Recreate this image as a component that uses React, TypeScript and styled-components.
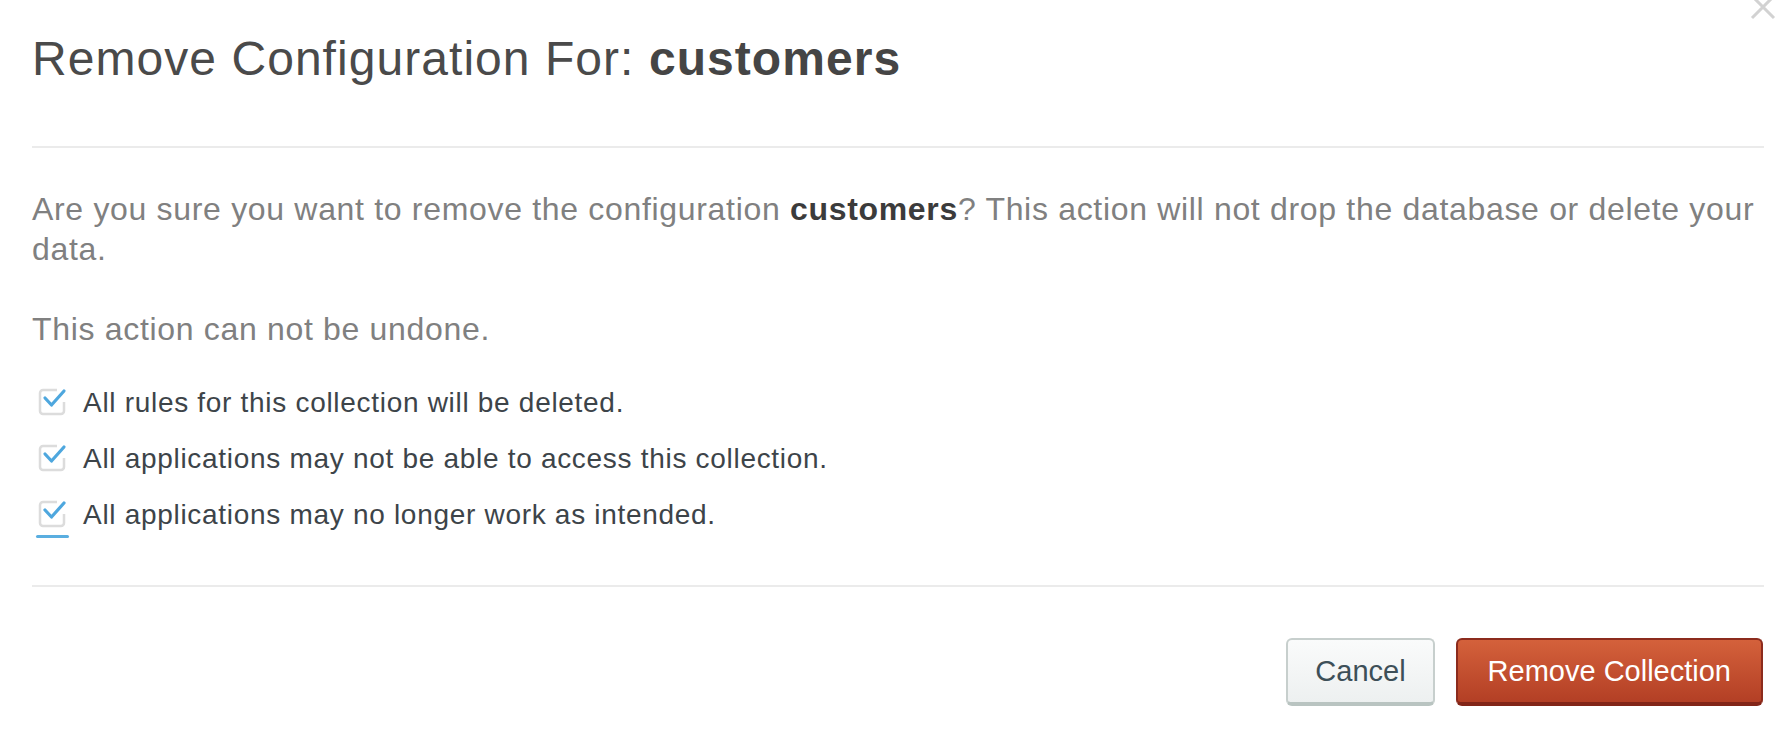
import React from "react";
import styled, { createGlobalStyle } from "styled-components";

/** Constants */
const NAME = "customers";
const CONSEQUENCES = [
  "All rules for this collection will be deleted.",
  "All applications may not be able to access this collection.",
  "All applications may no longer work as intended.",
];

const GlobalStyle = createGlobalStyle`
  html, body {
    margin: 0;
    padding: 0;
    background: #ffffff;
  }
  body {
    font-family: "Liberation Sans", Arial, sans-serif;
    -webkit-font-smoothing: antialiased;
  }
`;

const Modal = styled.div`
  position: relative;
  box-sizing: border-box;
  width: 1780px;
  height: 734px;
  padding: 0 16px 0 32px;
  overflow: hidden;
  background: #ffffff;
`;

const CloseButton = styled.button`
  position: absolute;
  top: -7px;
  right: 3px;
  width: 28px;
  height: 28px;
  padding: 0;
  border: 0;
  background: none;
  cursor: pointer;
`;

const Header = styled.header`
  padding: 30px 0 58px;
  border-bottom: 2px solid #ebebeb;
`;

const Title = styled.h2`
  margin: 0;
  font-size: 48px;
  line-height: 58px;
  font-weight: 400;
  letter-spacing: 1.05px;
  color: #4a4a4a;

  strong {
    font-weight: 700;
    color: #454545;
  }
`;

const Body = styled.section`
  padding: 41px 0 42px;
  border-bottom: 2px solid #ebebeb;
`;

const Paragraph = styled.p<{ $gap?: number }>`
  margin: ${(p) => p.$gap ?? 0}px 0 0;
  font-size: 32px;
  line-height: 40px;
  letter-spacing: 0.68px;
  color: #808080;

  strong {
    font-weight: 700;
    color: #3b3b3b;
  }
`;

const List = styled.ul`
  list-style: none;
  margin: 26px 0 0;
  padding: 0;
`;

const Item = styled.li`
  display: flex;
  align-items: center;
  gap: 16px;
  height: 56px;
  padding-left: 5px;
  font-size: 28px;
  letter-spacing: 0.7px;
  color: #3d4449;
`;

const CheckIcon = styled.span<{ $focused?: boolean }>`
  position: relative;
  display: flex;
  width: 30px;
  height: 30px;
  margin-top: -4px;

  &::after {
    content: "";
    display: ${(p) => (p.$focused ? "block" : "none")};
    position: absolute;
    left: -1px;
    right: -2px;
    bottom: -10px;
    height: 3px;
    border-radius: 2px;
    background: #5aaee0;
  }
`;

const Footer = styled.footer`
  display: flex;
  justify-content: flex-end;
  gap: 21px;
  padding: 51px 1px 0 0;
`;

const Button = styled.button<{ $danger?: boolean }>`
  box-sizing: border-box;
  height: 68px;
  padding: 0 ${(p) => (p.$danger ? 30 : 27)}px;
  border-radius: 6px;
  font-family: "Liberation Sans", Arial, sans-serif;
  font-size: 29px;
  cursor: pointer;
  border: 2px solid ${(p) => (p.$danger ? "#8c2b1d" : "#c7cfcd")};
  border-bottom-width: 4px;
  border-bottom-color: ${(p) => (p.$danger ? "#822518" : "#b9c4c1")};
  color: ${(p) => (p.$danger ? "#ffffff" : "#3d4f58")};
  background: ${(p) =>
    p.$danger
      ? "linear-gradient(#d4613b, #b33f25)"
      : "linear-gradient(#fafbfb, #edf0f0)"};
`;

const Check: React.FC = () => (
  <svg width="30" height="30" viewBox="0 0 30 30" fill="none">
    <path
      d="M20 4 H6 a3 3 0 0 0 -3 3 V25 a3 3 0 0 0 3 3 H24 a3 3 0 0 0 3 -3 V16"
      stroke="#dcdcdc"
      strokeWidth="2.5"
    />
    <path
      d="M8 12 L14.5 19 L27 5"
      stroke="#4ea7de"
      strokeWidth="3.2"
      strokeLinecap="round"
      strokeLinejoin="round"
    />
  </svg>
);

const App: React.FC = () => (
  <>
    <GlobalStyle />
    <Modal>
      <CloseButton aria-label="Close">
        <svg width="28" height="28" viewBox="0 0 28 28">
          <path
            d="M3 3 L25 25 M25 3 L3 25"
            stroke="#d2d2d2"
            strokeWidth="3"
          />
        </svg>
      </CloseButton>
      <Header>
        <Title>
          Remove Configuration For: <strong>{NAME}</strong>
        </Title>
      </Header>
      <Body>
        <Paragraph>
          Are you sure you want to remove the configuration{" "}
          <strong>{NAME}</strong>? This action will not drop the database or
          delete your data.
        </Paragraph>
        <Paragraph $gap={40}>This action can not be undone.</Paragraph>
        <List>
          {CONSEQUENCES.map((text, i) => (
            <Item key={text}>
              <CheckIcon $focused={i === CONSEQUENCES.length - 1}>
                <Check />
              </CheckIcon>
              {text}
            </Item>
          ))}
        </List>
      </Body>
      <Footer>
        <Button>Cancel</Button>
        <Button $danger>Remove Collection</Button>
      </Footer>
    </Modal>
  </>
);

export default App;
